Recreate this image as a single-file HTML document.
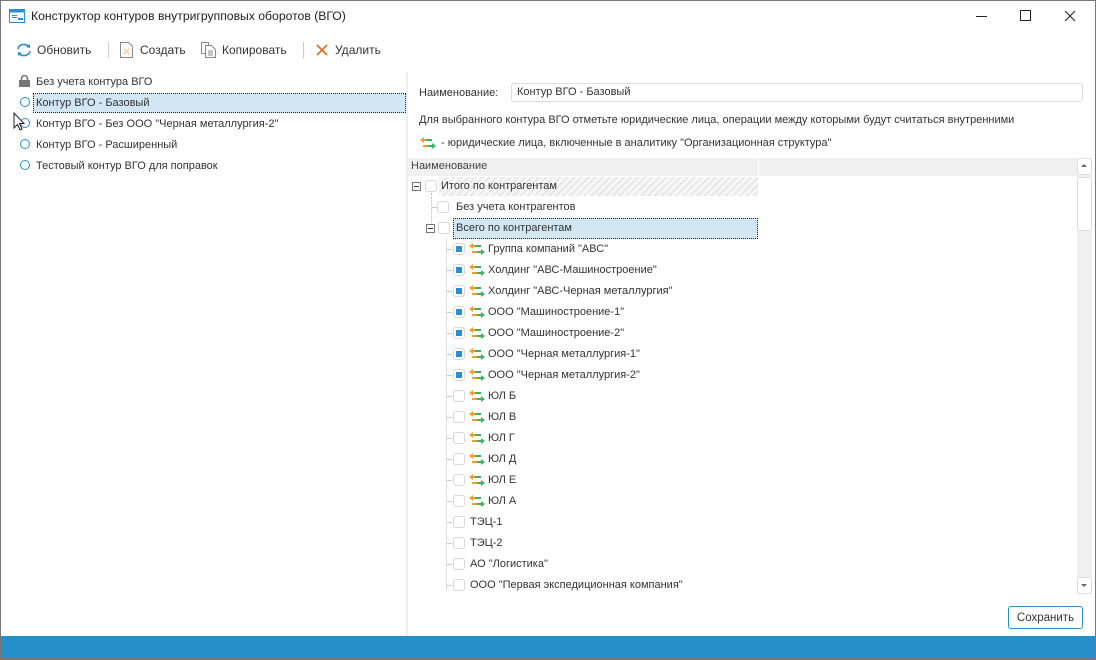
<!DOCTYPE html>
<html><head><meta charset="utf-8">
<style>
*{margin:0;padding:0;box-sizing:border-box}
body{width:1096px;height:660px;position:relative;overflow:hidden;background:#fff;font-family:"Liberation Sans",sans-serif;font-size:11px;line-height:15px;color:#333}
.a{position:absolute;white-space:nowrap}
.n{line-height:normal}
.cb{position:absolute;width:12px;height:12px;border:1px solid #d8d8d8;border-radius:3px;background:#fff}
.cb.on::after{content:"";position:absolute;left:2px;top:2px;width:6px;height:6px;background:#2a8fd0}
.exp{position:absolute;width:9px;height:9px;border:1px solid #777;background:#fff}
.exp::after{content:"";position:absolute;left:1px;top:3px;width:5px;height:1px;background:#333}
.circ{position:absolute;width:10px;height:10px;border:1.5px solid #2a8fd0;border-radius:50%}
.ic{position:absolute;width:16px;height:12px}
</style></head><body>
<div class="a" style="left:0;top:0;width:1096px;height:660px;border:1px solid #777;border-bottom:2px solid #777"></div>
<svg class="a" style="left:9px;top:9px" width="16" height="14" viewBox="0 0 16 14"><rect x="0.5" y="0.5" width="15" height="13" fill="#fff" stroke="#2a8fd0"/><rect x="0.5" y="0.5" width="15" height="3" fill="#2a8fd0"/><rect x="3" y="6" width="5" height="1" fill="#2a8fd0"/><rect x="3" y="8" width="5" height="1" fill="#2a8fd0"/><rect x="9" y="9" width="5" height="2" fill="#2a8fd0"/></svg>
<div class="a n" style="left:31px;top:9px;font-size:12.2px;color:#222">Конструктор контуров внутригрупповых оборотов (ВГО)</div>
<div class="a" style="left:976px;top:16px;width:11px;height:1px;background:#222"></div>
<div class="a" style="left:1020px;top:10px;width:11px;height:11px;border:1px solid #222"></div>
<svg class="a" style="left:1064px;top:10px" width="12" height="12"><path d="M1 1L11 11M11 1L1 11" stroke="#222" stroke-width="1.1"/></svg>
<svg class="a" style="left:16px;top:43px" width="16" height="14" viewBox="0 0 16 14"><path d="M2 6A6 5.5 0 0 1 13 4" fill="none" stroke="#2a8fd0" stroke-width="1.6"/><path d="M14 8A6 5.5 0 0 1 3 10" fill="none" stroke="#2a8fd0" stroke-width="1.6"/><path d="M10 4L14 5L14 1Z" fill="#2a8fd0"/><path d="M6 10L2 9L2 13Z" fill="#2a8fd0"/></svg>
<div class="a n" style="left:37px;top:43px;font-size:12px">Обновить</div>
<div class="a" style="left:108px;top:42px;width:1px;height:16px;background:#ccc"></div>
<svg class="a" style="left:120px;top:42px" width="13" height="16"><path d="M0.5 0.5H8.5L12.5 4.5V15.5H0.5Z" fill="#fff" stroke="#888"/><path d="M4 7l5 5M9 7l-5 5" stroke="#f0a030" stroke-width="1" stroke-dasharray="1 1"/></svg>
<div class="a n" style="left:140px;top:43px;font-size:12px">Создать</div>
<svg class="a" style="left:201px;top:42px" width="15" height="16"><path d="M0.5 0.5H7.5V11.5H0.5Z" fill="#fff" stroke="#888"/><path d="M4.5 3.5H10.5L14.5 7.5V15.5H4.5Z" fill="#fff" stroke="#888"/><path d="M7 9H12M7 11H12M7 13H12" stroke="#888"/></svg>
<div class="a n" style="left:222px;top:43px;font-size:12px">Копировать</div>
<div class="a" style="left:303px;top:42px;width:1px;height:16px;background:#ccc"></div>
<svg class="a" style="left:316px;top:44px" width="12" height="12"><path d="M1 1L11 11M11 1L1 11" stroke="#e07030" stroke-width="1.8"/></svg>
<div class="a n" style="left:335px;top:43px;font-size:12px">Удалить</div>
<svg class="a" style="left:19px;top:75px" width="11" height="12"><path d="M2.5 6V3.5A3 3 0 0 1 8.5 3.5V6" fill="none" stroke="#777" stroke-width="1.6"/><rect x="0" y="5" width="11" height="7" fill="#777"/></svg>
<div class="a" style="left:36px;top:75px">Без учета контура ВГО</div>
<div class="a" style="left:33px;top:93px;width:373px;height:20px;background:#d3e6f3;border:1px dotted #222"></div>
<div class="circ" style="left:20px;top:97px"></div><div class="a" style="left:36px;top:96px">Контур ВГО - Базовый</div>
<div class="circ" style="left:20px;top:118px"></div><div class="a" style="left:36px;top:117px">Контур ВГО - Без ООО "Черная металлургия-2"</div>
<svg class="a" style="left:13px;top:112px" width="14" height="20"><path d="M1 1V16L4.5 12.5L7 18L9 17L6.5 11.5H11Z" fill="#fff" stroke="#222"/></svg>
<div class="circ" style="left:20px;top:139px"></div><div class="a" style="left:36px;top:138px">Контур ВГО - Расширенный</div>
<div class="circ" style="left:20px;top:160px"></div><div class="a" style="left:36px;top:159px">Тестовый контур ВГО для поправок</div>
<div class="a" style="left:406px;top:72px;width:2px;height:564px;background:#efefef"></div>
<div class="a" style="left:419px;top:86px">Наименование:</div>
<div class="a" style="left:511px;top:83px;width:572px;height:19px;border:1px solid #ddd;border-radius:3px;padding:1px 5px;color:#333">Контур ВГО - Базовый</div>
<div class="a" style="left:419px;top:113px">Для выбранного контура ВГО отметьте юридические лица, операции между которыми будут считаться внутренними</div>
<svg class="ic" style="left:420px;top:137px" viewBox="0 0 16 12"><path d="M4 3H12" stroke="#3cb464" stroke-width="2"/><path d="M2 3H6" stroke="#f0a030" stroke-width="2"/><path d="M0 3L4 0V6Z" fill="#f0a030"/><path d="M3 9H9" stroke="#f0a030" stroke-width="2"/><path d="M8 9H12" stroke="#3cb464" stroke-width="2"/><path d="M16 9L12 6V12Z" fill="#3cb464"/></svg>
<div class="a" style="left:441px;top:136px">- юридические лица, включенные в аналитику "Организационная структура"</div>
<div class="a" style="left:408px;top:158px;width:669px;height:18px;background:#f0f0f0"></div>
<div class="a" style="left:758px;top:158px;width:1px;height:18px;background:#fff"></div>
<div class="a" style="left:411px;top:159px;color:#444">Наименование</div>
<div class="a" style="left:1077px;top:158px;width:15px;height:436px;background:#f0f0f0"></div>
<div class="a" style="left:1077px;top:158px;width:15px;height:17px;background:#fff;border:1px solid #ddd;border-radius:3px"></div>
<div class="a" style="left:1081px;top:164px;border-left:3px solid transparent;border-right:3px solid transparent;border-bottom:3px solid #666"></div>
<div class="a" style="left:1077px;top:177px;width:15px;height:54px;background:#fff;border:1px solid #ddd;border-radius:3px"></div>
<div class="a" style="left:1077px;top:577px;width:15px;height:17px;background:#fff;border:1px solid #ddd;border-radius:3px"></div>
<div class="a" style="left:1081px;top:584px;border-left:3px solid transparent;border-right:3px solid transparent;border-top:3px solid #666"></div>
<div class="a" style="left:439px;top:177px;width:319px;height:19px;background:repeating-linear-gradient(135deg,#e8e8e8 0 2px,#f7f7f7 2px 5px)"></div>
<div class="exp" style="left:412px;top:182px"></div>
<div class="cb" style="left:425px;top:180px"></div>
<div class="a" style="left:441px;top:179px">Итого по контрагентам</div>
<div class="a" style="left:431px;top:193px;width:1px;height:34px;border-left:1px dotted #bbb"></div>
<div class="a" style="left:432px;top:207px;width:5px;height:1px;background:#ccc"></div>
<div class="cb" style="left:437px;top:201px"></div>
<div class="a" style="left:456px;top:200px">Без учета контрагентов</div>
<div class="a" style="left:453px;top:218px;width:305px;height:21px;background:#d3e6f3;border:1px dotted #222"></div>
<div class="exp" style="left:426px;top:224px"></div>
<div class="cb" style="left:438px;top:222px"></div>
<div class="a" style="left:456px;top:221px">Всего по контрагентам</div>
<div class="a" style="left:446px;top:238px;width:1px;height:352px;background:#ddd"></div>
<div>
<div class="a" style="left:447px;top:249px;width:5px;height:1px;background:#ccc"></div><div class="cb on" style="left:453px;top:243px"></div><svg class="ic" style="left:469px;top:243px" viewBox="0 0 16 12"><path d="M4 3H12" stroke="#3cb464" stroke-width="2"/><path d="M2 3H6" stroke="#f0a030" stroke-width="2"/><path d="M0 3L4 0V6Z" fill="#f0a030"/><path d="M3 9H9" stroke="#f0a030" stroke-width="2"/><path d="M8 9H12" stroke="#3cb464" stroke-width="2"/><path d="M16 9L12 6V12Z" fill="#3cb464"/></svg><div class="a" style="left:488px;top:242px">Группа компаний "АВС"</div>
<div class="a" style="left:447px;top:270px;width:5px;height:1px;background:#ccc"></div><div class="cb on" style="left:453px;top:264px"></div><svg class="ic" style="left:469px;top:264px" viewBox="0 0 16 12"><path d="M4 3H12" stroke="#3cb464" stroke-width="2"/><path d="M2 3H6" stroke="#f0a030" stroke-width="2"/><path d="M0 3L4 0V6Z" fill="#f0a030"/><path d="M3 9H9" stroke="#f0a030" stroke-width="2"/><path d="M8 9H12" stroke="#3cb464" stroke-width="2"/><path d="M16 9L12 6V12Z" fill="#3cb464"/></svg><div class="a" style="left:488px;top:263px">Холдинг "АВС-Машиностроение"</div>
<div class="a" style="left:447px;top:291px;width:5px;height:1px;background:#ccc"></div><div class="cb on" style="left:453px;top:285px"></div><svg class="ic" style="left:469px;top:285px" viewBox="0 0 16 12"><path d="M4 3H12" stroke="#3cb464" stroke-width="2"/><path d="M2 3H6" stroke="#f0a030" stroke-width="2"/><path d="M0 3L4 0V6Z" fill="#f0a030"/><path d="M3 9H9" stroke="#f0a030" stroke-width="2"/><path d="M8 9H12" stroke="#3cb464" stroke-width="2"/><path d="M16 9L12 6V12Z" fill="#3cb464"/></svg><div class="a" style="left:488px;top:284px">Холдинг "АВС-Черная металлургия"</div>
<div class="a" style="left:447px;top:312px;width:5px;height:1px;background:#ccc"></div><div class="cb on" style="left:453px;top:306px"></div><svg class="ic" style="left:469px;top:306px" viewBox="0 0 16 12"><path d="M4 3H12" stroke="#3cb464" stroke-width="2"/><path d="M2 3H6" stroke="#f0a030" stroke-width="2"/><path d="M0 3L4 0V6Z" fill="#f0a030"/><path d="M3 9H9" stroke="#f0a030" stroke-width="2"/><path d="M8 9H12" stroke="#3cb464" stroke-width="2"/><path d="M16 9L12 6V12Z" fill="#3cb464"/></svg><div class="a" style="left:488px;top:305px">ООО "Машиностроение-1"</div>
<div class="a" style="left:447px;top:333px;width:5px;height:1px;background:#ccc"></div><div class="cb on" style="left:453px;top:327px"></div><svg class="ic" style="left:469px;top:327px" viewBox="0 0 16 12"><path d="M4 3H12" stroke="#3cb464" stroke-width="2"/><path d="M2 3H6" stroke="#f0a030" stroke-width="2"/><path d="M0 3L4 0V6Z" fill="#f0a030"/><path d="M3 9H9" stroke="#f0a030" stroke-width="2"/><path d="M8 9H12" stroke="#3cb464" stroke-width="2"/><path d="M16 9L12 6V12Z" fill="#3cb464"/></svg><div class="a" style="left:488px;top:326px">ООО "Машиностроение-2"</div>
<div class="a" style="left:447px;top:354px;width:5px;height:1px;background:#ccc"></div><div class="cb on" style="left:453px;top:348px"></div><svg class="ic" style="left:469px;top:348px" viewBox="0 0 16 12"><path d="M4 3H12" stroke="#3cb464" stroke-width="2"/><path d="M2 3H6" stroke="#f0a030" stroke-width="2"/><path d="M0 3L4 0V6Z" fill="#f0a030"/><path d="M3 9H9" stroke="#f0a030" stroke-width="2"/><path d="M8 9H12" stroke="#3cb464" stroke-width="2"/><path d="M16 9L12 6V12Z" fill="#3cb464"/></svg><div class="a" style="left:488px;top:347px">ООО "Черная металлургия-1"</div>
<div class="a" style="left:447px;top:375px;width:5px;height:1px;background:#ccc"></div><div class="cb on" style="left:453px;top:369px"></div><svg class="ic" style="left:469px;top:369px" viewBox="0 0 16 12"><path d="M4 3H12" stroke="#3cb464" stroke-width="2"/><path d="M2 3H6" stroke="#f0a030" stroke-width="2"/><path d="M0 3L4 0V6Z" fill="#f0a030"/><path d="M3 9H9" stroke="#f0a030" stroke-width="2"/><path d="M8 9H12" stroke="#3cb464" stroke-width="2"/><path d="M16 9L12 6V12Z" fill="#3cb464"/></svg><div class="a" style="left:488px;top:368px">ООО "Черная металлургия-2"</div>
<div class="a" style="left:447px;top:396px;width:5px;height:1px;background:#ccc"></div><div class="cb" style="left:453px;top:390px"></div><svg class="ic" style="left:469px;top:390px" viewBox="0 0 16 12"><path d="M4 3H12" stroke="#3cb464" stroke-width="2"/><path d="M2 3H6" stroke="#f0a030" stroke-width="2"/><path d="M0 3L4 0V6Z" fill="#f0a030"/><path d="M3 9H9" stroke="#f0a030" stroke-width="2"/><path d="M8 9H12" stroke="#3cb464" stroke-width="2"/><path d="M16 9L12 6V12Z" fill="#3cb464"/></svg><div class="a" style="left:488px;top:389px">ЮЛ Б</div>
<div class="a" style="left:447px;top:417px;width:5px;height:1px;background:#ccc"></div><div class="cb" style="left:453px;top:411px"></div><svg class="ic" style="left:469px;top:411px" viewBox="0 0 16 12"><path d="M4 3H12" stroke="#3cb464" stroke-width="2"/><path d="M2 3H6" stroke="#f0a030" stroke-width="2"/><path d="M0 3L4 0V6Z" fill="#f0a030"/><path d="M3 9H9" stroke="#f0a030" stroke-width="2"/><path d="M8 9H12" stroke="#3cb464" stroke-width="2"/><path d="M16 9L12 6V12Z" fill="#3cb464"/></svg><div class="a" style="left:488px;top:410px">ЮЛ В</div>
<div class="a" style="left:447px;top:438px;width:5px;height:1px;background:#ccc"></div><div class="cb" style="left:453px;top:432px"></div><svg class="ic" style="left:469px;top:432px" viewBox="0 0 16 12"><path d="M4 3H12" stroke="#3cb464" stroke-width="2"/><path d="M2 3H6" stroke="#f0a030" stroke-width="2"/><path d="M0 3L4 0V6Z" fill="#f0a030"/><path d="M3 9H9" stroke="#f0a030" stroke-width="2"/><path d="M8 9H12" stroke="#3cb464" stroke-width="2"/><path d="M16 9L12 6V12Z" fill="#3cb464"/></svg><div class="a" style="left:488px;top:431px">ЮЛ Г</div>
<div class="a" style="left:447px;top:459px;width:5px;height:1px;background:#ccc"></div><div class="cb" style="left:453px;top:453px"></div><svg class="ic" style="left:469px;top:453px" viewBox="0 0 16 12"><path d="M4 3H12" stroke="#3cb464" stroke-width="2"/><path d="M2 3H6" stroke="#f0a030" stroke-width="2"/><path d="M0 3L4 0V6Z" fill="#f0a030"/><path d="M3 9H9" stroke="#f0a030" stroke-width="2"/><path d="M8 9H12" stroke="#3cb464" stroke-width="2"/><path d="M16 9L12 6V12Z" fill="#3cb464"/></svg><div class="a" style="left:488px;top:452px">ЮЛ Д</div>
<div class="a" style="left:447px;top:480px;width:5px;height:1px;background:#ccc"></div><div class="cb" style="left:453px;top:474px"></div><svg class="ic" style="left:469px;top:474px" viewBox="0 0 16 12"><path d="M4 3H12" stroke="#3cb464" stroke-width="2"/><path d="M2 3H6" stroke="#f0a030" stroke-width="2"/><path d="M0 3L4 0V6Z" fill="#f0a030"/><path d="M3 9H9" stroke="#f0a030" stroke-width="2"/><path d="M8 9H12" stroke="#3cb464" stroke-width="2"/><path d="M16 9L12 6V12Z" fill="#3cb464"/></svg><div class="a" style="left:488px;top:473px">ЮЛ Е</div>
<div class="a" style="left:447px;top:501px;width:5px;height:1px;background:#ccc"></div><div class="cb" style="left:453px;top:495px"></div><svg class="ic" style="left:469px;top:495px" viewBox="0 0 16 12"><path d="M4 3H12" stroke="#3cb464" stroke-width="2"/><path d="M2 3H6" stroke="#f0a030" stroke-width="2"/><path d="M0 3L4 0V6Z" fill="#f0a030"/><path d="M3 9H9" stroke="#f0a030" stroke-width="2"/><path d="M8 9H12" stroke="#3cb464" stroke-width="2"/><path d="M16 9L12 6V12Z" fill="#3cb464"/></svg><div class="a" style="left:488px;top:494px">ЮЛ А</div>
<div class="a" style="left:447px;top:522px;width:5px;height:1px;background:#ccc"></div><div class="cb" style="left:453px;top:516px"></div><div class="a" style="left:470px;top:515px">ТЭЦ-1</div>
<div class="a" style="left:447px;top:543px;width:5px;height:1px;background:#ccc"></div><div class="cb" style="left:453px;top:537px"></div><div class="a" style="left:470px;top:536px">ТЭЦ-2</div>
<div class="a" style="left:447px;top:564px;width:5px;height:1px;background:#ccc"></div><div class="cb" style="left:453px;top:558px"></div><div class="a" style="left:470px;top:557px">АО "Логистика"</div>
<div class="a" style="left:447px;top:585px;width:5px;height:1px;background:#ccc"></div><div class="cb" style="left:453px;top:579px"></div><div class="a" style="left:470px;top:578px">ООО "Первая экспедиционная компания"</div>
</div>
<div class="a" style="left:1008px;top:606px;width:75px;height:23px;border:1px solid #2a8fd0;border-radius:3px;text-align:center;line-height:22px;color:#333;font-size:11.5px">Сохранить</div>
<div class="a" style="left:1px;top:636px;width:1094px;height:22px;background:#268fca"></div>
</body></html>
